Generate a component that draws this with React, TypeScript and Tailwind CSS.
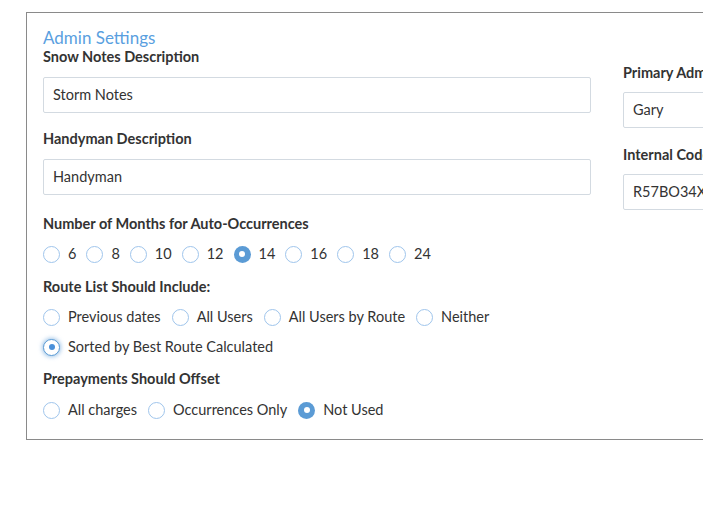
import React from "react";

type Option = { label: string; value: string };

const months = ["6", "8", "10", "12", "14", "16", "18", "24"];

const routeOptions: Option[] = [
  { label: "Previous dates", value: "previous" },
  { label: "All Users", value: "all" },
  { label: "All Users by Route", value: "route" },
  { label: "Neither", value: "neither" },
  { label: "Sorted by Best Route Calculated", value: "sorted" },
];

const offsetOptions: Option[] = [
  { label: "All charges", value: "all" },
  { label: "Occurrences Only", value: "occurrences" },
  { label: "Not Used", value: "none" },
];

function Radio({ checked, focused }: { checked?: boolean; focused?: boolean }) {
  if (focused) {
    return (
      <span className="flex h-[17px] w-[17px] shrink-0 items-center justify-center rounded-full border border-[#5b9bd5] bg-white shadow-[0_0_4px_1px_rgba(91,155,213,0.6)]">
        <span className="h-[6px] w-[6px] rounded-full bg-[#4a90d9]" />
      </span>
    );
  }
  if (checked) {
    return (
      <span className="flex h-[17px] w-[17px] shrink-0 items-center justify-center rounded-full bg-[#5b9bd5]">
        <span className="h-[6px] w-[6px] rounded-full bg-white" />
      </span>
    );
  }
  return <span className="h-[17px] w-[17px] shrink-0 rounded-full border border-[#9fc5ec] bg-white" />;
}

function RadioItem({ label, checked, focused }: { label: string; checked?: boolean; focused?: boolean }) {
  return (
    <label className="flex h-5 items-center gap-2">
      <Radio checked={checked} focused={focused} />
      <span className="text-[14.5px] leading-5 text-[#333]">{label}</span>
    </label>
  );
}

function FieldLabel({ children, className = "" }: { children: React.ReactNode; className?: string }) {
  return <div className={`text-[14.5px] font-bold leading-5 text-[#333] ${className}`}>{children}</div>;
}

function TextBox({ value }: { value: string }) {
  return (
    <div className="flex h-9 items-center rounded-[2px] border border-[#d3dae1] bg-white px-[9px] text-[14.5px] text-[#333]">
      {value}
    </div>
  );
}

export default function App() {
  const month = "14";
  const route = "sorted";
  const offset = "none";

  return (
    <div className="h-[510px] w-[703px] overflow-hidden bg-white" style={{ fontFamily: "Lato, 'Open Sans', sans-serif" }}>
      <div className="ml-[26px] mt-3 w-[1200px] border border-[#8a8a8a] px-4 pb-[19px] pt-[15px]">
        <div className="grid grid-cols-[548px_548px] gap-x-8">
          <div>
            <h2 className="text-[17px] leading-[19px] text-[#5a9fdf]">Admin Settings</h2>
            <FieldLabel>Snow Notes Description</FieldLabel>
            <div className="mt-[10px]">
              <TextBox value="Storm Notes" />
            </div>
            <FieldLabel className="mt-[16px]">Handyman Description</FieldLabel>
            <div className="mt-[10px]">
              <TextBox value="Handyman" />
            </div>

            <FieldLabel className="mt-[19px]">Number of Months for Auto-Occurrences</FieldLabel>
            <div className="mt-[10px] flex gap-x-[10px]">
              {months.map((m) => (
                <RadioItem key={m} label={m} checked={m === month} />
              ))}
            </div>

            <FieldLabel className="mt-[13px]">Route List Should Include:</FieldLabel>
            <div className="mt-[10px] flex w-[470px] flex-wrap gap-x-[11px] gap-y-[10px]">
              {routeOptions.map((o) => (
                <RadioItem key={o.value} label={o.label} focused={o.value === route} />
              ))}
            </div>

            <FieldLabel className="mt-[12px]">Prepayments Should Offset</FieldLabel>
            <div className="mt-[11px] flex gap-x-[11px]">
              {offsetOptions.map((o) => (
                <RadioItem key={o.value} label={o.label} checked={o.value === offset} />
              ))}
            </div>
          </div>

          <div className="pt-[35px]">
            <FieldLabel>Primary Admin</FieldLabel>
            <div className="mt-[9px]">
              <TextBox value="Gary" />
            </div>
            <FieldLabel className="mt-[17px]">Internal Code</FieldLabel>
            <div className="mt-[9px]">
              <TextBox value="R57BO34XWQ" />
            </div>
          </div>
        </div>
      </div>
    </div>
  );
}
